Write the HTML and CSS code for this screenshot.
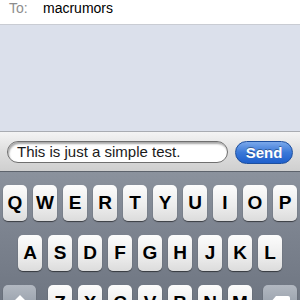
FILE: index.html
```html
<!DOCTYPE html>
<html>
<head>
<meta charset="utf-8">
<link rel="stylesheet" href="styles.css">
</head>
<body>
<div class="screen">
  <div class="to-bar"><span class="to-label">To:</span><span class="to-name">macrumors</span></div>
  <div class="messages"></div>
  <div class="compose">
    <div class="field">This is just a simple test.</div>
    <div class="send">Send</div>
  </div>
  <div class="keyboard">
    <div class="row row1">
      <div class="key">Q</div><div class="key">W</div><div class="key">E</div><div class="key">R</div><div class="key">T</div><div class="key">Y</div><div class="key">U</div><div class="key">I</div><div class="key">O</div><div class="key">P</div>
    </div>
    <div class="row row2">
      <div class="key">A</div><div class="key">S</div><div class="key">D</div><div class="key">F</div><div class="key">G</div><div class="key">H</div><div class="key">J</div><div class="key">K</div><div class="key">L</div>
    </div>
    <div class="row row3">
      <div class="key special shift"><svg width="20" height="18" viewBox="0 0 20 18"><path d="M10 1 L19 10 L14 10 L14 17 L6 17 L6 10 L1 10 Z" fill="#fff"/></svg></div>
      <div class="letters">
        <div class="key">Z</div><div class="key">X</div><div class="key">C</div><div class="key">V</div><div class="key">B</div><div class="key">N</div><div class="key">M</div>
      </div>
      <div class="key special del"><svg width="22" height="16" viewBox="0 0 22 16"><path d="M7 1 H19 Q21 1 21 3 V13 Q21 15 19 15 H7 L1 8 Z" fill="#fff"/></svg></div>
    </div>
  </div>
</div>
</body>
</html>
```
FILE: styles.css
```css
html, body {
  margin: 0;
  padding: 0;
}
body {
  font-family: "Liberation Sans", Arial, sans-serif;
  width: 300px;
  height: 300px;
  overflow: hidden;
}
.screen {
  width: 300px;
  height: 300px;
  display: flex;
  flex-direction: column;
  overflow: hidden;
}
.to-bar {
  height: 24px;
  flex: none;
  background: #fff;
  border-bottom: 1px solid #c9ccd3;
  display: flex;
  align-items: flex-start;
  font-size: 14px;
  line-height: 16px;
  padding-left: 9px;
}
.to-label {
  color: #8d8d8d;
  width: 34px;
}
.to-name {
  color: #000;
}
.messages {
  height: 106px;
  flex: none;
  background: #dbe0eb;
}
.compose {
  height: 38px;
  flex: none;
  border-top: 1px solid #a9acb2;
  background: linear-gradient(#f4f4f4, #dedede 50%, #cfcfcf);
  display: flex;
  align-items: center;
  padding-left: 7px;
  gap: 7px;
  box-sizing: border-box;
  height: 40px;
}
.field {
  width: 221px;
  height: 22px;
  box-sizing: border-box;
  border: 1px solid #6f6f6f;
  border-radius: 12px;
  background: #fff;
  box-shadow: inset 1px 2px 2px rgba(0,0,0,0.35);
  font-size: 15px;
  line-height: 20px;
  padding-left: 9px;
  color: #1a1a1a;
  margin-top: 1px;
}
.send {
  width: 58px;
  height: 23px;
  border-radius: 12px;
  background: linear-gradient(#7aa8ea, #3a78d8 50%, #1e5fcc);
  border: 1px solid #1d4f9e;
  box-sizing: border-box;
  color: #fff;
  font-weight: bold;
  font-size: 15px;
  line-height: 21px;
  text-align: center;
  text-shadow: 0 -1px 0 rgba(0,0,0,0.35);
  margin-top: 1px;
}
.keyboard {
  flex: 1;
  background: linear-gradient(#8b929d, #7c838f 40%, #6b727e);
  border-top: 1px solid #5d636c;
  padding-top: 13px;
  display: flex;
  flex-direction: column;
  gap: 14px;
}
.row {
  display: flex;
  gap: 6px;
  height: 36px;
  flex: none;
}
.row1 { padding-left: 3px; }
.row2 { padding-left: 18px; }
.row3 { padding-left: 3px; gap: 0; }
.letters {
  display: flex;
  gap: 6px;
  margin-left: 12px;
}
.key {
  width: 24px;
  height: 36px;
  border-radius: 5px;
  background: linear-gradient(#fcfcfc, #ececec 60%, #dcdcdc);
  box-shadow: 0 1px 1px rgba(0,0,0,0.55);
  font-weight: bold;
  font-size: 19px;
  line-height: 36px;
  text-align: center;
  color: #000;
  flex: none;
}
.special {
  width: 33px;
  background: linear-gradient(#b2b8c1, #98a0ab 60%, #8a919c);
  display: flex;
  justify-content: center;
  align-items: center;
}
.shift { margin-right: 0; }
.del { margin-left: 11px; width: 34px; }
```
